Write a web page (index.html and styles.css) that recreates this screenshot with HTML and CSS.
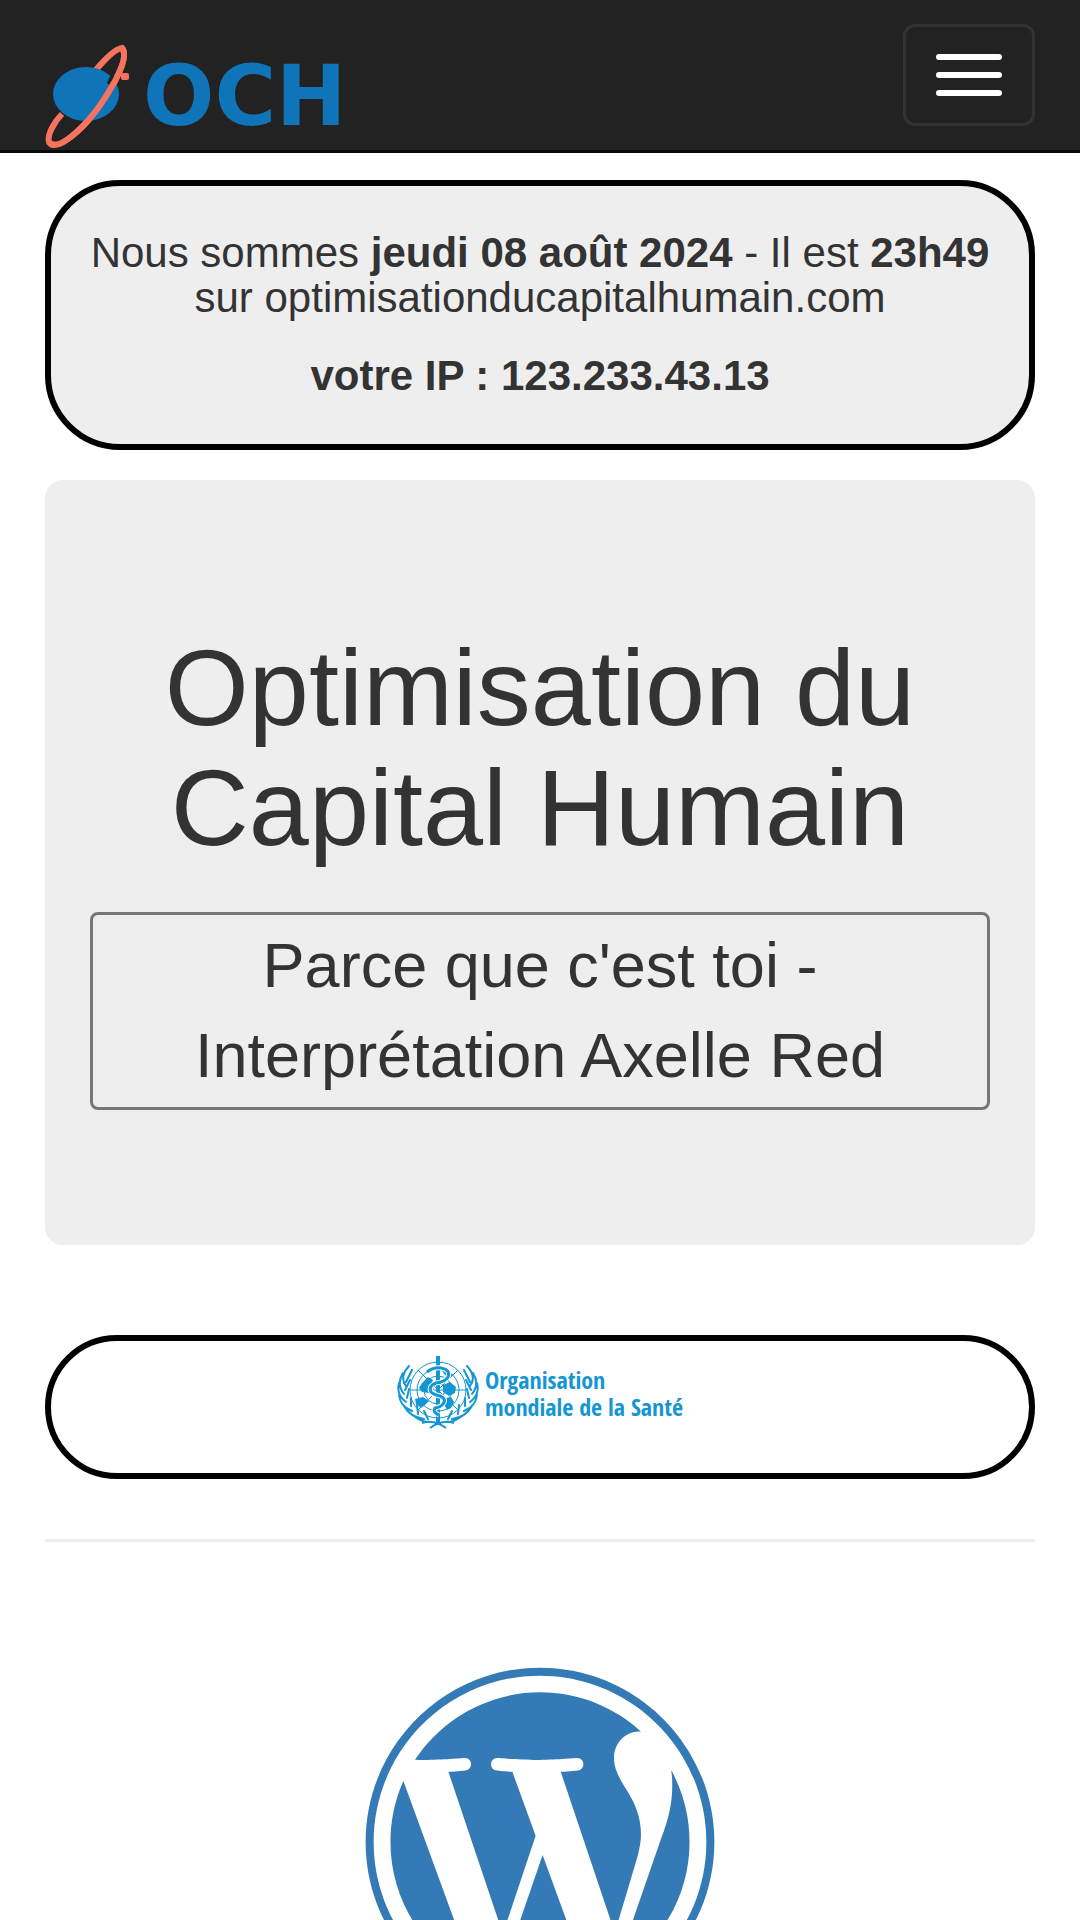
FILE: index.html
```html
<!DOCTYPE html>
<html lang="fr">
<head>
<meta charset="utf-8">
<meta name="viewport" content="width=device-width, initial-scale=1">
<title>Optimisation du Capital Humain</title>
<link rel="stylesheet" href="styles.css">
</head>
<body>
<header class="navbar">
  <a class="brand" href="#">
    <svg class="brand-icon" viewBox="0 0 84 104" aria-hidden="true">
      <path d="M50 27C60 15 70 5 77 4C82 10 77 24 70 37C58 59 42 80 27 92C17 100 8 104 4 98C2 91 9 78 17 70" fill="none" stroke="#f5735f" stroke-width="6"/>
      <ellipse cx="41" cy="50" rx="33" ry="27" fill="#0f75b8"/>
      <path d="M66 30L73 34L68 44L62 39Z" fill="#222"/>
      <path d="M77 4C82 10 77 24 70 37C58 59 42 80 27 92C17 100 8 104 4 98" fill="none" stroke="#f5735f" stroke-width="6"/>
      <rect x="76" y="29" width="8" height="7" rx="2" fill="#f5735f"/>
    </svg>
    <span class="brand-name">OCH</span>
  </a>
  <button class="toggle" type="button" aria-label="Menu">
    <span class="bar"></span><span class="bar"></span><span class="bar"></span>
  </button>
</header>
<main class="container">
  <section class="panel info">
    <p>Nous sommes <strong>jeudi 08 août 2024</strong> - Il est <strong>23h49</strong><br>sur optimisationducapitalhumain.com</p>
    <p><strong>votre IP : 123.233.43.13</strong></p>
  </section>
  <section class="hero">
    <h1>Optimisation du Capital Humain</h1>
    <button class="song" type="button">Parce que c'est toi -<br>Interprétation Axelle Red</button>
  </section>
  <section class="panel partner">
    <a class="who" href="#">
      <svg class="who-icon" viewBox="0 0 82 74" fill="none" stroke="#1496d2" aria-hidden="true">
        <g stroke-width="1">
          <circle cx="41" cy="35" r="28"/><circle cx="41" cy="35" r="21"/><circle cx="41" cy="35" r="14"/><circle cx="41" cy="35" r="7"/>
          <path d="M13 35H69M41 7V63M21 15L61 55M61 15L21 55"/>
        </g>
        <g fill="#1496d2" stroke="none">
          <path d="M25 28l6-6 5 3-2 5 3 3-5 5-7-1-3-4zM46 30l7-3 6 5-1 6-6 3-6-4zM49 43l5-1 3 5-3 6-4 2-3-6zM18 44l8-2 6 4-4 4-4 3-5-4zM44 15l8 1 4 5-6 1z"/>
        </g>
        <g stroke-width="2" stroke-linecap="round">
          <path d="M12 11Q2 22 9 31M6 18Q-1 29 7 39M2 28Q-1 40 9 47M2 40Q3 51 15 56M7 51Q13 62 27 64M17 61Q24 67 33 67M15 15L9 27M13 25L8 35M12 34L10 43M14 43L14 51M20 50L21 59M27 56L31 64"/>
          <path d="M70 11Q80 22 73 31M76 18Q83 29 75 39M80 28Q83 40 73 47M80 40Q79 51 67 56M75 51Q69 62 55 64M65 61Q58 67 49 67M67 15L73 27M69 25L74 35M70 34L72 43M68 43L68 51M62 50L61 59M55 56L51 64"/>
        </g>
        <path d="M25 68Q37 64 49 73M57 68Q45 64 33 73" stroke-width="2"/>
        <path d="M41 1V70" stroke-width="4"/>
        <path d="M30 17Q36 12 44 13Q54 15 51 22Q48 27 39 28Q31 31 34 37Q37 40 43 41Q50 44 46 49Q44 52 38 53Q35 57 42 60" stroke="#fff" stroke-width="5"/>
        <path d="M30 17Q36 12 44 13Q54 15 51 22Q48 27 39 28Q31 31 34 37Q37 40 43 41Q50 44 46 49Q44 52 38 53Q35 57 42 60" stroke-width="3"/>
      </svg>
      <span class="who-name">Organisation<br>mondiale de la Santé</span>
    </a>
  </section>
  <hr class="rule">
  <a class="wordpress" href="#" aria-label="WordPress">
    <svg class="wordpress-icon" viewBox="0 0 512 512" aria-hidden="true"><path fill="currentColor" d="M61.7 169.4l101.5 278C92.2 413 43.3 340.2 43.3 256c0-30.9 6.6-60.1 18.4-86.6zm337.9 75.9c0-26.3-9.4-44.5-17.5-58.7-10.8-17.5-20.9-32.4-20.9-49.9 0-19.6 14.8-37.8 35.7-37.8.9 0 1.8.1 2.8.2-37.9-34.7-88.3-55.9-143.7-55.9-74.3 0-139.7 38.1-177.8 95.9 5 .2 9.7.3 13.7.3 22.2 0 56.7-2.7 56.7-2.7 11.5-.7 12.8 16.2 1.4 17.5 0 0-11.5 1.3-24.3 2l77.5 230.4L249.8 247l-33.1-90.8c-11.5-.7-22.3-2-22.3-2-11.5-.7-10.1-18.2 1.3-17.5 0 0 35.1 2.7 56 2.7 22.2 0 56.7-2.7 56.7-2.7 11.5-.7 12.8 16.2 1.4 17.5 0 0-11.5 1.3-24.3 2l76.9 228.7 21.2-70.9c9-29.4 16-50.5 16-68.7zm-139.9 29.3l-63.8 185.5c19.1 5.6 39.2 8.7 60.1 8.7 24.8 0 48.5-4.3 70.6-12.1-.6-.9-1.1-1.9-1.5-2.9l-65.4-179.2zm183-120.7c.9 6.8 1.4 14 1.4 21.9 0 21.6-4 45.8-16.2 76.2l-65 187.9C426.2 403 468.7 334.5 468.7 256c0-37-9.4-71.8-26-102.1zM504 256c0 136.8-111.3 248-248 248C119.2 504 8 392.7 8 256 8 119.2 119.2 8 256 8c136.7 0 248 111.2 248 248zm-11.4 0c0-130.5-106.2-236.6-236.6-236.6C125.5 19.4 19.4 125.5 19.4 256S125.6 492.6 256 492.6c130.5 0 236.6-106.1 236.6-236.6z"/></svg>
  </a>
</main>
</body>
</html>
```
FILE: styles.css
```css
* {
  box-sizing: border-box;
}

body {
  margin: 0;
  background: #fff;
  color: #333;
  font: 42px/45px "Liberation Sans", Arial, sans-serif;
}

.navbar {
  display: flex;
  justify-content: space-between;
  align-items: flex-start;
  padding: 24px 45px 0;
  height: 153px;
  background: #222;
  border-bottom: 3px solid #080808;
}

.brand {
  display: flex;
  align-items: center;
  gap: 14px;
  padding-top: 20px;
  color: #0f75b8;
  text-decoration: none;
}

.brand-icon {
  width: 84px;
  height: 104px;
}

.brand-name {
  font: bold 84px/104px "DejaVu Sans", sans-serif;
}

.toggle {
  display: flex;
  flex-direction: column;
  gap: 12px;
  padding: 27px 30px;
  background: transparent;
  border: 3px solid #333;
  border-radius: 12px;
}

.bar {
  width: 66px;
  height: 6px;
  border-radius: 3px;
  background: #fff;
}

.container {
  padding: 27px 45px 0;
}

.panel {
  border: 6px solid #000;
  border-radius: 75px;
  text-align: center;
}

.info {
  display: flex;
  flex-direction: column;
  gap: 33px;
  padding: 44px 30px 46px;
  margin-bottom: 30px;
  background: #eee;
}

.info p {
  margin: 0;
}

.hero {
  padding: 148px 45px 135px;
  margin-bottom: 90px;
  background: #eee;
  border-radius: 18px;
  text-align: center;
}

.hero h1 {
  margin: 0 0 44px;
  font-size: 108px;
  font-weight: 400;
  line-height: 120px;
}

.song {
  display: block;
  width: 100%;
  padding: 5px 18px 7px;
  background: transparent;
  border: 3px solid #767676;
  border-radius: 8px;
  color: inherit;
  font: inherit;
  font-size: 63px;
  line-height: 90px;
}

.partner {
  display: flex;
  justify-content: center;
  padding: 14px 0 44px;
}

.who {
  display: flex;
  gap: 6px;
  color: #1496d2;
  text-align: left;
  text-decoration: none;
}

.who-icon {
  width: 82px;
  height: 74px;
}

.who-name {
  padding-top: 11px;
  font: bold 24px/27px "Open Sans Condensed", "Liberation Sans Narrow", "Noto Sans", sans-serif;
}

.rule {
  margin: 60px 0 120px;
  border: 0;
  border-top: 3px solid #eee;
}

.wordpress {
  display: flex;
  justify-content: center;
  color: #337ab7;
}

.wordpress-icon {
  width: 360px;
  height: 360px;
}
```
